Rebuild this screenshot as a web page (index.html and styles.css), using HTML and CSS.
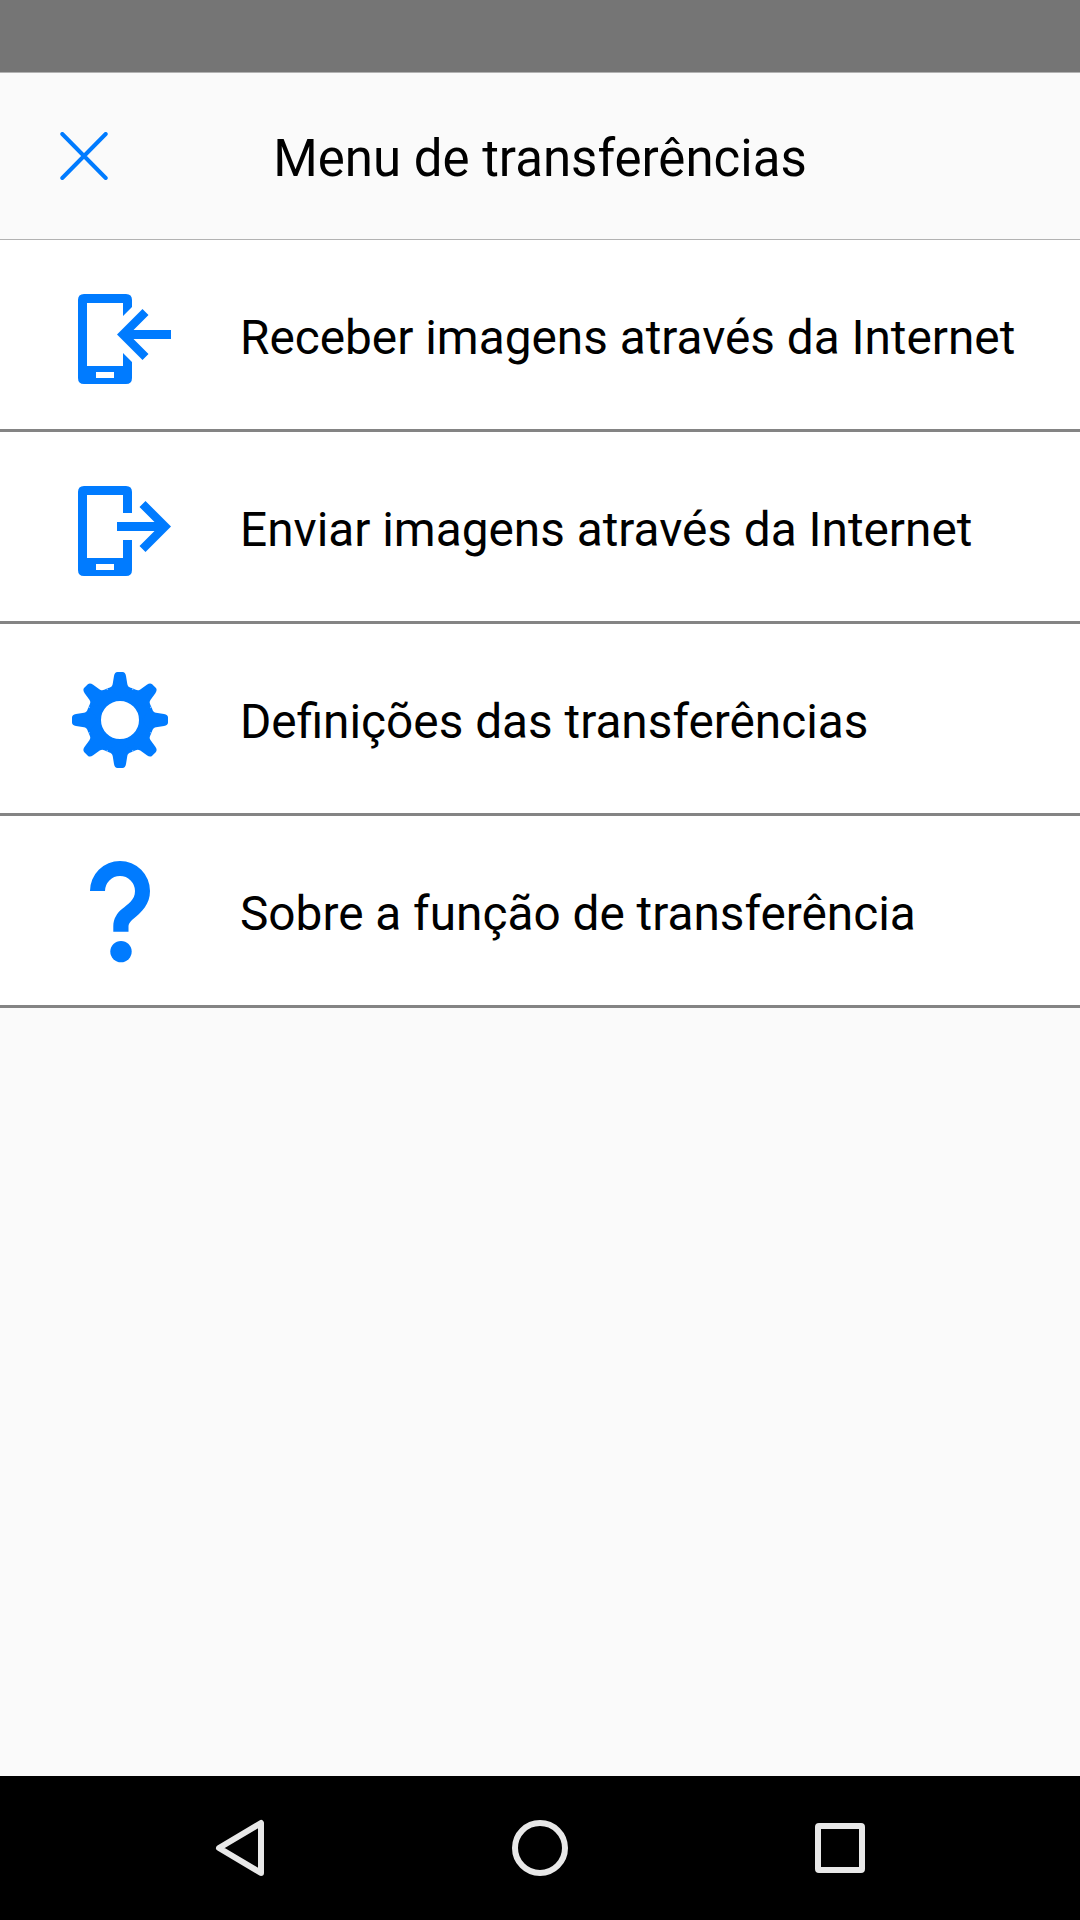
FILE: index.html
```html
<!DOCTYPE html>
<html lang="pt">
<head>
<meta charset="utf-8">
<title>Menu de transferências</title>
<link rel="stylesheet" href="styles.css">
</head>
<body>
<div class="screen">
  <div class="status-bar"></div>
  <header class="header">
    <button class="close" aria-label="Fechar">
      <svg width="48" height="48" viewBox="-24 -24 48 48"><path d="M-21.7-22L21.7 22M21.7-22L-21.7 22" stroke="#007bff" stroke-width="4" stroke-linecap="round"/></svg>
    </button>
    <h1 class="title">Menu de transferências</h1>
  </header>
  <ul class="menu">
    <li class="row">
      <svg class="icon" viewBox="0 0 240 189">
        <path fill-rule="evenodd" d="M84 54H126Q132 54 132 60V67L123 76V63H87V126H123V113L132 122V138Q132 144 126 144H84Q78 144 78 138V60Q78 54 84 54ZM96 132V138H114V132Z"/>
        <path d="M117 94.5L142.5 69L148.5 75L133.5 90H171V99H133.5L148.5 114L142.5 120Z"/>
      </svg>
      <span class="label">Receber imagens através da Internet</span>
    </li>
    <li class="row">
      <svg class="icon" viewBox="0 0 240 189">
        <path fill-rule="evenodd" d="M84 54H126Q132 54 132 60V81H123V63H87V126H123V108H132V138Q132 144 126 144H84Q78 144 78 138V60Q78 54 84 54ZM96 132V138H114V132Z"/>
        <path d="M171 94.5L145.5 69L139.5 75L154.5 90H117V99H154.5L139.5 114L145.5 120Z"/>
      </svg>
      <span class="label">Enviar imagens através da Internet</span>
    </li>
    <li class="row">
      <svg class="icon" viewBox="0 0 240 189">
        <defs><path id="tooth" d="M0-22L-13-31.4C-9.3-33-8-32.8-7.3-36L-6-44Q-5.3-48-2.5-48H2.5Q5.3-48 6-44L7.3-36C8-32.8 9.3-33 13-31.4Z"/></defs>
        <g transform="translate(120 96)">
          <circle class="gear-ring" r="26"/>
          <use href="#tooth"/>
          <use href="#tooth" transform="rotate(45)"/>
          <use href="#tooth" transform="rotate(90)"/>
          <use href="#tooth" transform="rotate(135)"/>
          <use href="#tooth" transform="rotate(180)"/>
          <use href="#tooth" transform="rotate(225)"/>
          <use href="#tooth" transform="rotate(270)"/>
          <use href="#tooth" transform="rotate(315)"/>
        </g>
      </svg>
      <span class="label">Definições das transferências</span>
    </li>
    <li class="row">
      <svg class="icon" viewBox="0 0 240 189">
        <path d="M90 75A30 30 0 0 1 150 75C150 88 142 96 132 104Q128.5 107.500 128.500 110V115.700H113.300V110C113.300 103 117 97 122 93C128 88 135 84 135 75A15 15 0 0 0 105 75Z"/>
        <circle cx="121" cy="135.600" r="10.700"/>
      </svg>
      <span class="label">Sobre a função de transferência</span>
    </li>
  </ul>
  <nav class="nav-bar">
    <svg class="nav-icon" viewBox="-30 -30 60 60"><path d="M21-25V25L-21 0Z"/></svg>
    <svg class="nav-icon" viewBox="-30 -30 60 60"><circle r="25"/></svg>
    <svg class="nav-icon" viewBox="-30 -30 60 60"><rect x="-22" y="-22" width="44" height="44" rx="1"/></svg>
  </nav>
</div>
</body>
</html>
```
FILE: styles.css
```css
* {
  box-sizing: border-box;
}

body {
  margin: 0;
  font-family: Roboto, "Liberation Sans", sans-serif;
  color: #000;
}

.screen {
  display: flex;
  flex-direction: column;
  width: 1080px;
  height: 1920px;
  background: #fafafa;
}

.status-bar {
  height: 72px;
  background: #757575;
}

.header {
  display: grid;
  grid-template-columns: 168px 1fr 168px;
  align-items: center;
  height: 168px;
  border-top: 1px solid #b2b2b2;
  border-bottom: 1px solid #b2b2b2;
}

.close {
  display: flex;
  justify-content: center;
  padding: 0;
  border: 0;
  background: none;
}

.title {
  margin: 0;
  padding-top: 5px;
  font-size: 51px;
  font-weight: 400;
  line-height: 60px;
  text-align: center;
}

.menu {
  flex: 1;
  margin: 0;
  padding: 0;
  list-style: none;
}

.row {
  display: flex;
  align-items: center;
  height: 192px;
  background: #fff;
  border-bottom: 3px solid #848484;
}

.icon {
  flex: none;
  width: 240px;
  height: 189px;
  fill: #007bff;
}

.gear-ring {
  fill: none;
  stroke: #007bff;
  stroke-width: 14;
}

.label {
  padding-top: 7px;
  font-size: 47.75px;
  line-height: 56px;
  white-space: nowrap;
}

.nav-bar {
  display: flex;
  justify-content: center;
  align-items: center;
  gap: 240px;
  height: 144px;
  background: #000;
}

.nav-icon {
  width: 60px;
  height: 60px;
  fill: none;
  stroke: #e8e8e8;
  stroke-width: 6;
  stroke-linejoin: round;
}
```
